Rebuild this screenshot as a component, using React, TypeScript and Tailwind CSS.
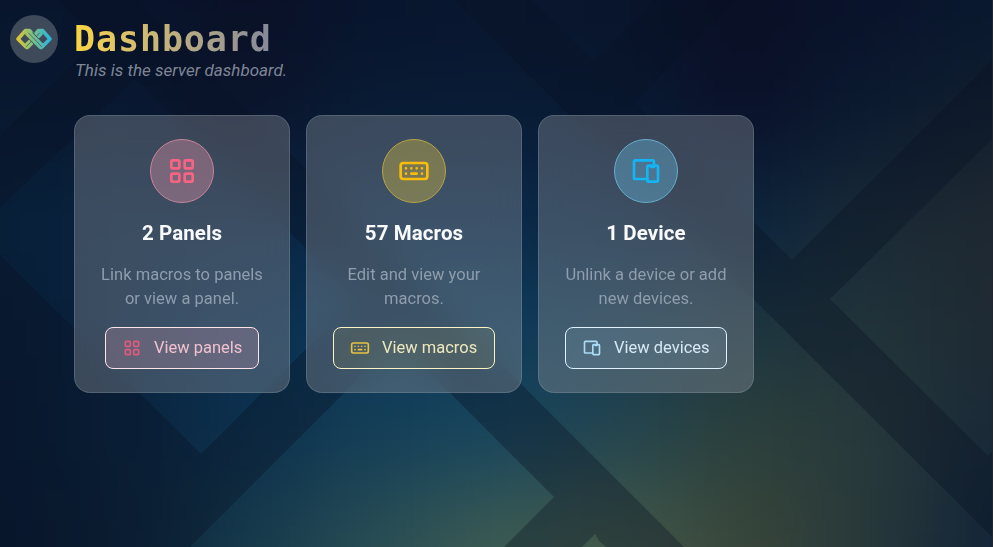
import type { ReactNode } from "react";

// Coarse colour field, blurred into a soft gradient. 9 columns x 6 rows.
const FIELD: string[][] = [
  ["#08152d", "#08142c", "#0a1026", "#08142d", "#09162e", "#09142b", "#0a0f24", "#09122a", "#08182f"],
  ["#08182f", "#091831", "#0a132a", "#091b34", "#091b35", "#091a32", "#0a1029", "#0a1a30", "#121e2e"],
  ["#08203a", "#09233e", "#0a2340", "#0a2846", "#0a2a49", "#0a2340", "#0a233d", "#1a2a36", "#1e2831"],
  ["#081b34", "#092440", "#0a2f50", "#0d3858", "#0e3b5a", "#143a50", "#1d3540", "#20333a", "#1f2a33"],
  ["#081a32", "#0a243e", "#0c304d", "#143e57", "#18465e", "#25454f", "#2c403b", "#28393b", "#182938"],
  ["#09182f", "#0b2238", "#173a4b", "#2a4e54", "#3e5c51", "#445a49", "#39463a", "#27383a", "#122438"],
];

// Dark ribbons crossing the wallpaper, in page pixels.
const RIBBONS = [
  "M58 0H137L684 547H606L600 542L595 534L582 547H504L554 497Z",
  "M454 0H532L792 260L993 60V138L830 299L988 456L993 451V538Z",
  "M655 0H737L634 103L593 61Z",
  "M0 136L98 38L137 77L0 208Z",
  "M0 255L201 454L356 299L397 340L190 547H0Z",
];

function Wallpaper() {
  return (
    <svg className="absolute inset-0 h-full w-full" viewBox="0 0 993 547" preserveAspectRatio="none" aria-hidden="true">
      <defs>
        <filter id="soft" x="-10%" y="-10%" width="120%" height="120%" colorInterpolationFilters="sRGB">
          <feGaussianBlur stdDeviation="46" />
        </filter>
      </defs>
      <g filter="url(#soft)">
        <rect x="-200" y="-200" width="1400" height="950" fill="#09162e" />
        {FIELD.map((row, r) =>
          row.map((fill, c) => (
            <rect
              key={`${r}-${c}`}
              x={c === 0 ? -200 : c * 124 - 62}
              y={r === 0 ? -200 : r * 109 - 55}
              width={c === 0 ? 263 : c === 8 ? 300 : 125}
              height={r === 0 ? 255 : r === 5 ? 300 : 110}
              fill={fill}
            />
          )),
        )}
      </g>
      <g fill="#0a1223" fillOpacity="0.34">
        {RIBBONS.map((d) => (
          <path key={d} d={d} />
        ))}
      </g>
    </svg>
  );
}

function Icon({ size, children }: { size: number; children: ReactNode }) {
  return (
    <svg
      width={size}
      height={size}
      viewBox="0 0 24 24"
      fill="none"
      stroke="currentColor"
      strokeWidth="2"
      strokeLinecap="round"
      strokeLinejoin="round"
    >
      {children}
    </svg>
  );
}

const PANELS = (
  <>
    <rect x="4" y="4" width="6" height="6" rx="1" />
    <rect x="14" y="4" width="6" height="6" rx="1" />
    <rect x="4" y="14" width="6" height="6" rx="1" />
    <rect x="14" y="14" width="6" height="6" rx="1" />
  </>
);

const KEYBOARD = (
  <>
    <rect x="2" y="6" width="20" height="12" rx="2" />
    <path d="M6 10v.01M10 10v.01M14 10v.01M18 10v.01M6 14v.01M18 14v.01M10 14h4" />
  </>
);

const DEVICES = (
  <>
    <rect x="13" y="8" width="8" height="12" rx="1" />
    <path d="M18 8V5a1 1 0 0 0-1-1H4a1 1 0 0 0-1 1v12a1 1 0 0 0 1 1h9M16 9h2" />
  </>
);

function Logo() {
  return (
    <div className="flex size-12 items-center justify-center rounded-full bg-[#3e495a]">
      <svg width="38" height="24" viewBox="0 0 38 24" fill="none" strokeLinejoin="round" strokeLinecap="round">
        <defs>
          <linearGradient id="knot" gradientUnits="userSpaceOnUse" x1="1" y1="0" x2="37" y2="0">
            <stop offset="0" stopColor="#e8c928" />
            <stop offset="0.5" stopColor="#74bd8b" />
            <stop offset="1" stopColor="#22b4e8" />
          </linearGradient>
        </defs>
        {/* outer loops */}
        <g stroke="url(#knot)" strokeWidth="3.6">
          <path d="M9.5 18.5L3 12L10.5 3.5H14.5L17 6.5" />
          <path d="M28.5 18.5L35 12L27.5 3.5H23.5L21 6.5" />
        </g>
        {/* strand rising to the right */}
        <path d="M12 19L24.5 6.5" stroke="url(#knot)" strokeWidth="6.4" />
        <path d="M11.5 19.5L24.5 6" stroke="#3e495a" strokeWidth="0.7" />
        {/* strand falling to the right, passing in front */}
        <path d="M15 8L24.5 17.5" stroke="#3e495a" strokeWidth="7.6" strokeLinecap="butt" />
        <path d="M13.5 6.5L26 19" stroke="url(#knot)" strokeWidth="6.4" />
        <path d="M13.5 6L26.5 19.5" stroke="#3e495a" strokeWidth="0.7" />
      </svg>
    </div>
  );
}

interface CardProps {
  icon: ReactNode;
  title: string;
  text: string;
  action: string;
  badge: string;
  button: string;
  buttonIcon: string;
}

const CARDS: CardProps[] = [
  {
    icon: PANELS,
    title: "2 Panels",
    text: "Link macros to panels or view a panel.",
    action: "View panels",
    badge: "border-[#ca8499] bg-[#f09bb0]/35 text-[#f96485]",
    button: "w-[154px] border-[#ffe4e9] bg-[#fdb4c8]/20 text-[#f1c2ce]",
    buttonIcon: "text-[#de5d7d]",
  },
  {
    icon: KEYBOARD,
    title: "57 Macros",
    text: "Edit and view your macros.",
    action: "View macros",
    badge: "border-[#b9a445] bg-[#fad035]/32 text-[#fbbd0c]",
    button: "w-[162px] border-[#fbf5c5] bg-[#fde047]/8 text-[#eee7bd]",
    buttonIcon: "text-[#e8c43c]",
  },
  {
    icon: DEVICES,
    title: "1 Device",
    text: "Unlink a device or add new devices.",
    action: "View devices",
    badge: "border-[#67aecb] bg-[#6cc9f0]/35 text-[#14b4f5]",
    button: "w-[162px] border-[#e0f2fe] bg-[#bae6fd]/10 text-[#d6e9f5]",
    buttonIcon: "text-[#a9dcf7]",
  },
];

function Card({ icon, title, text, action, badge, button, buttonIcon }: CardProps) {
  return (
    <section className="flex h-[278px] w-[216px] flex-col items-center rounded-2xl border border-[#a3afbd]/25 bg-[#93989f]/37 px-[23px] pt-[23px] text-center backdrop-blur-lg">
      <div className={`flex size-16 items-center justify-center rounded-full border ${badge}`}>
        <Icon size={32}>{icon}</Icon>
      </div>
      <h2 className="mt-4 text-[20.5px] leading-7 font-bold tracking-[0.1px] text-[#f8fafc]">{title}</h2>
      <p className="mt-4 -mr-1 -ml-1 text-[16.5px] leading-6 tracking-[0.02px] text-[#8f9dac]">{text}</p>
      <button
        className={`mt-4 flex h-[42px] shrink-0 items-center gap-3 rounded-lg border pl-4 text-[16.5px] whitespace-nowrap ${button}`}
      >
        <span className={buttonIcon}>
          <Icon size={20}>{icon}</Icon>
        </span>
        {action}
      </button>
    </section>
  );
}

export default function App() {
  return (
    <div className="relative h-[547px] w-[993px] overflow-hidden bg-[#09162e] font-['Roboto',sans-serif]">
      <Wallpaper />
      <div className="relative flex h-full gap-4 border-r border-[#22252b] pt-[15px] pl-[10px]">
        <Logo />
        <main>
          <header className="h-[100px] pt-1">
            <h1 className="w-fit bg-linear-to-r from-[#fcd53f] to-[#85889a] bg-clip-text font-['DejaVu_Sans_Mono',monospace] text-[35px] leading-[40px] font-bold tracking-[0.9px] text-transparent">
              Dashboard
            </h1>
            <p className="-mt-px pl-px text-[17px] leading-6 tracking-[0.02px] text-[#7f8695] italic">This is the server dashboard.</p>
          </header>
          <div className="flex gap-4">
            {CARDS.map((card) => (
              <Card key={card.title} {...card} />
            ))}
          </div>
        </main>
      </div>
    </div>
  );
}
